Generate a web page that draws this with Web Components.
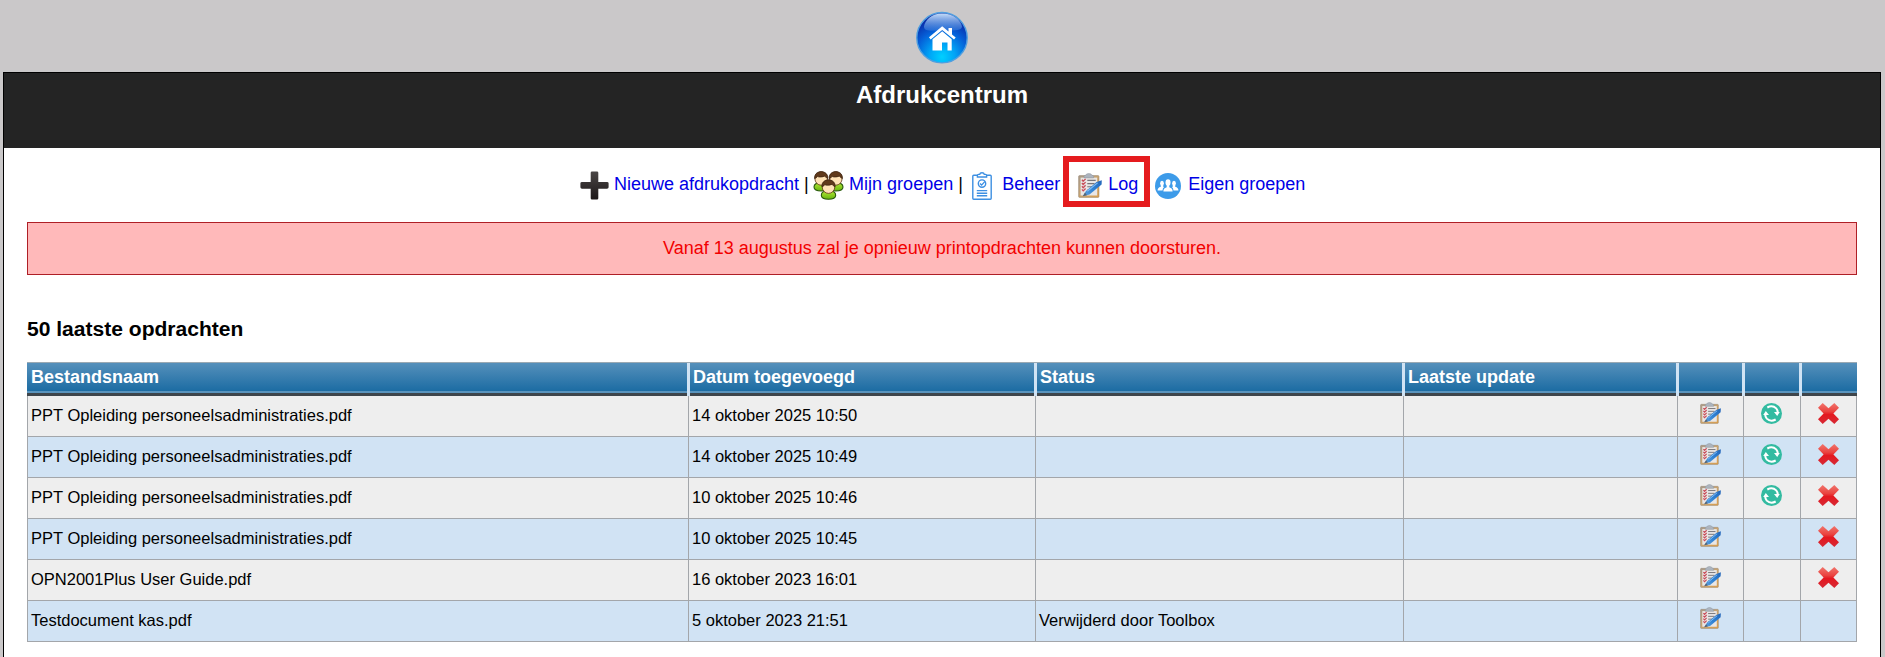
<!DOCTYPE html>
<html lang="nl">
<head>
<meta charset="utf-8">
<title>Afdrukcentrum</title>
<style>
html,body{margin:0;height:100%;overflow:hidden;background:#cac8c9}
body{font-family:"Liberation Sans",Arial,sans-serif;font-size:18px;color:#000}
</style>
</head>
<body>
<print-center></print-center>
<script>
const ICONS = {
home:`<svg viewBox="0 0 52 53" width="52" height="53"><defs>
<radialGradient id="b" cx=".5" cy=".88" r=".85"><stop offset="0" stop-color="#00d0ff"/><stop offset=".3" stop-color="#00a4f6"/><stop offset=".62" stop-color="#0560d8"/><stop offset="1" stop-color="#0a1f9c"/></radialGradient>
<linearGradient id="s" x1="0" y1="0" x2="0" y2="1"><stop offset="0" stop-color="#c4dcf8"/><stop offset="1" stop-color="#3c7edc" stop-opacity=".55"/></linearGradient></defs>
<circle cx="26" cy="26.7" r="25.2" fill="url(#b)" stroke="#4f9fe0" stroke-width="1.4"/>
<path d="M26 2.6C37 2.6 45 9 46 15.5C46 20 36 19.5 26 19.5S8 21 8 15.5C9 9 16 2.6 26 2.6Z" fill="url(#s)"/>
<path d="M13 26.2L26.2 15.3 32.5 20.4V17H36V23.4L39.7 26.4 38 28.6 26.2 19 14.7 28.6Z" fill="#fff"/><path d="M16.5 28.2L26.2 20.2 35.7 28.2V39.5H31.5V31.5H26V39.5H16.5Z" fill="#fff"/></svg>`,
plus:`<svg viewBox="0 0 29 30" width="29" height="30"><defs><linearGradient id="p" x1="0" y1="0" x2="0" y2="1"><stop offset="0" stop-color="#4a4646"/><stop offset="1" stop-color="#1d1718"/></linearGradient></defs><path d="M12 .5H17Q18.3 .5 18.3 1.8V11H27Q28.6 11 28.6 12.3V16.3Q28.6 17.7 27 17.7H18.3V27.2Q18.3 28.5 17 28.5H12Q10.7 28.5 10.7 27.2V17.7H2Q.4 17.7 .4 16.3V12.3Q.4 11 2 11H10.7V1.8Q10.7 .5 12 .5Z" fill="url(#p)"/></svg>`,
people:`<svg viewBox="0 0 31 29" width="31" height="29"><defs>
<linearGradient id="g" x1="0" y1="0" x2="0" y2="1"><stop offset="0" stop-color="#b4e834"/><stop offset="1" stop-color="#67b50e"/></linearGradient>
<g id="m"><path d="M-7.2 8.5Q-7.2 4 0 4T7.2 8.5Q7.2 12.4 0 12.4T-7.2 8.5Z" fill="url(#g)" stroke="#28580c" stroke-width="1.1"/><ellipse cx="0" cy="0" rx="6.3" ry="6.6" fill="#ffe2b6" stroke="#5d3210" stroke-width=".8"/><path d="M-6.6 0C-7.4 -9.4 7.4 -9.4 6.6 0C5 -.8 4.5 -1.6 3.5 -2.4C0 -1.2 -3 -1.4 -4 -2.4C-4.2 -1 -5 -.6 -6.6 0Z" fill="#60391b" stroke="#38200d" stroke-width=".7"/></g></defs>
<use href="#m" x="8.2" y="7.6"/><use href="#m" x="22.8" y="7.6"/><use href="#m" x="15.5" y="15.8"/></svg>`,
board:`<svg viewBox="0 0 20 28" width="20" height="28" fill="none" stroke="#3d8fe2" stroke-width="1.4"><path d="M6 3.3H1.7Q.8 3.3 .8 4.2V26.3Q.8 27.2 1.7 27.2H18.3Q19.2 27.2 19.2 26.3V4.2Q19.2 3.3 18.3 3.3H14M5.4 5V3.3Q5.4 2.4 6.5 2.4H7.7Q8 .8 10 .8T12.3 2.4H13.5Q14.6 2.4 14.6 3.3V5Z"/><circle cx="10" cy="11.6" r="3.7"/><path d="M8 11.6L9.6 13.1 13 9.4M4.8 18.6H15.2M4.8 21.2H15.2M4.8 23.7H15.2"/></svg>`,
log:`<svg viewBox="0 0 24 25" width="24" height="25"><defs><linearGradient id="c" x1="0" y1="0" x2="1" y2="1"><stop offset="0" stop-color="#a89a8a"/><stop offset=".5" stop-color="#c9a470"/><stop offset="1" stop-color="#dda04c"/></linearGradient><linearGradient id="q" x1="0" y1="1" x2="1" y2="0"><stop offset="0" stop-color="#5f9fdc"/><stop offset=".5" stop-color="#2f82d4"/><stop offset="1" stop-color="#2465b8"/></linearGradient></defs>
<rect x=".6" y="2.6" width="20.4" height="21.8" rx="1" fill="url(#c)" stroke="#94806a" stroke-width=".5"/><path d="M2.6 4.6H19.2V22.5H2.6Z" fill="#e9e6e5"/>
<path d="M6 4.9V3.2Q6 2.4 7.6 2.3Q8 .5 10.8 .5T14 2.3Q15.6 2.4 15.6 3.2V4.9Z" fill="#adb4be" stroke="#8a929c" stroke-width=".5"/>
<path d="M9.3 7.4H17.7M9.3 10.6H16.5M9.3 13.8H14M9.3 17H11.5" stroke="#77757a" stroke-width="1.1"/>
<path d="M3.9 6.8L5.2 8.3 7.6 5.9M3.9 10L5.2 11.5 7.6 9.1M3.9 13.2L5.2 14.7 7.6 12.3M3.9 16.4L5.2 17.9 7.6 15.5" fill="none" stroke="#c94c59" stroke-width="1.3"/>
<path d="M4.8 23.2L8 17.9 18.6 9 23.8 7.2 23.6 11.6 11.5 21.6Z" fill="url(#q)"/><path d="M9.3 18.3L19.6 9.9" stroke="#82bdf2" stroke-width="1.1"/><path d="M4.8 23.2L7 19.6 9 22.2Z" fill="#5a6572"/></svg>`,
group:`<svg viewBox="0 0 26 26" width="26" height="26"><circle cx="13" cy="13" r="13" fill="#3d9be9"/><g fill="#fff"><ellipse cx="7" cy="10.3" rx="1.9" ry="2.5"/><ellipse cx="19" cy="10.3" rx="1.9" ry="2.5"/><path d="M2.6 17.6Q2.4 14.7 5.8 13.8V12H8.2V13.8L9.1 14.1Q7.7 15 7.5 17.6ZM23.4 17.6Q23.6 14.7 20.2 13.8V12H17.8V13.8L16.9 14.1Q18.3 15 18.5 17.6Z"/><ellipse cx="13" cy="9.6" rx="2.5" ry="3.3"/><path d="M8.4 18.4Q8.2 15.2 11.7 14.2V12H14.3V14.2Q17.8 15.2 17.6 18.4Z"/></g></svg>`,
sync:`<svg viewBox="0 0 21 21" width="21" height="21"><circle cx="10.5" cy="10.5" r="10.5" fill="#33bba1"/><g fill="none" stroke="#fff" stroke-width="2"><path d="M6.3 4.5Q11.4 1.7 15.2 5.4Q16.6 7 16.8 9.4"/><path d="M14.7 16.5Q9.6 19.3 5.8 15.6Q4.4 14 4.2 11.6"/></g><path d="M13 9H18.8L16.2 12.9ZM8 12H2.2L4.8 8.1Z" fill="#fff"/></svg>`,
cross:`<svg viewBox="0 0 21 21" width="21" height="21"><defs><linearGradient id="x" x1="0" y1="0" x2="0" y2="1"><stop offset="0" stop-color="#f1766d"/><stop offset=".4" stop-color="#ea4340"/><stop offset=".55" stop-color="#e41820"/><stop offset="1" stop-color="#d62a35"/></linearGradient></defs><path d="M4.7 0L10.5 5.2 16.3 0 21 4.7 15.4 10.5 21 16.3 16.3 21 10.5 15.8 4.7 21 0 16.3 5.6 10.5 0 4.7Z" fill="url(#x)"/></svg>`
};
function define(name, html, setup){
  const t=document.createElement('template'); t.innerHTML=html;
  customElements.define(name, class extends HTMLElement{
    connectedCallback(){
      if(this.shadowRoot) return;
      const r=this.attachShadow({mode:'open'});
      r.append(t.content.cloneNode(true));
      if(setup) setup(this,r);
    }
  });
}
define('ui-icon',`<style>:host{display:block;flex:none}svg{display:block;width:100%;height:100%}</style>`,(el,r)=>{
  r.append(document.createRange().createContextualFragment(ICONS[el.getAttribute('name')]));
});
define('nav-link',`<style>
:host{display:flex;align-items:flex-start;position:relative;flex:none}
a{color:#0000e6;text-decoration:none;line-height:20px;white-space:nowrap;padding-top:3px}
:host([marked])::after{content:"";position:absolute;left:-15px;top:-15px;width:75px;height:39px;border:6px solid #e51b1e}
</style><slot name="icon"></slot><a><slot></slot></a>`);
define('alert-bar',`<style>
:host{display:block;box-sizing:border-box;height:53px;border:1px solid #ae1f26;background:#ffb9ba;color:#f20000;text-align:center;line-height:51px}
</style><slot></slot>`);
define('job-head',`<style>
:host{display:grid;grid-template-columns:var(--cols);height:34px;box-sizing:border-box;border-top:1px solid #9aa9b3;color:#fff;font-weight:bold}
span{box-sizing:border-box;height:33px;line-height:29px;padding-left:3px;margin-left:-1px;margin-right:1px;border-left:3px solid #d0e3f4;
 background:linear-gradient(#3e454b,#3e454b) 0 30px/100% 3px no-repeat,linear-gradient(#5a94bd,#5a94bd) 0 28px/100% 2px no-repeat,linear-gradient(#5590bb,#1c6ca3 28px)}
.first{border-left:0;margin-left:0;padding-left:4px}.last{margin-right:0}
</style><span class="first">Bestandsnaam</span><span>Datum toegevoegd</span><span>Status</span><span>Laatste update</span><span></span><span></span><span class="last"></span>`);
define('job-row',`<style>
:host{display:grid;grid-template-columns:var(--cols);height:41px;font-size:16.5px;background:#eee}
:host([alt]){background:#d1e3f4}
div{box-sizing:border-box;border-left:1px solid #a3a6aa;border-bottom:1px solid #a3a6aa;padding-left:3px;line-height:38px;white-space:nowrap}
div:last-child{border-right:1px solid #a3a6aa}
.i{display:flex;justify-content:center;padding:7px 0 0}
.i ui-icon{width:21px;height:21px}
.i ui-icon[name=log]{width:21px;height:22px;margin-top:-1px}
.i ui-icon[name=sync]{margin-right:2px}
</style>`,(el,r)=>{
  for(const k of ['file','date','status','update']){const d=document.createElement('div');d.textContent=el.getAttribute(k)||'';r.append(d);}
  const have=el.getAttribute('actions').split(' ');
  for(const k of ['log','sync','cross']){const d=document.createElement('div');d.className='i';
    if(have.includes(k)){const i=document.createElement('ui-icon');i.setAttribute('name',k);d.append(i);}
    r.append(d);}
});
define('job-table',`<style>:host{display:block;--cols:661px 347px 368px 274px 66px 57px 57px}</style><job-head></job-head><slot></slot>`);
define('print-center',`<style>
:host{display:flex;flex-direction:column;height:657px;padding:0 4px 0 3px}
.top{height:72px;flex:none;display:flex;justify-content:center;padding-top:11px;box-sizing:border-box}
.top ui-icon{width:52px;height:53px}
main{flex:1;border:1px solid #000;border-bottom:0;background:#fff;min-height:0}
h1{margin:0;height:75px;box-sizing:border-box;background:#242424;color:#fff;font-size:24px;line-height:28px;padding-top:8px;text-align:center}
.body{padding:0 23px}
nav{display:flex;align-items:flex-start;height:74px;box-sizing:border-box;padding:23px 0 0 553px}
nav>span{line-height:20px;padding-top:3px;width:5px;flex:none}
h3{margin:42px 0 0;font-size:21.06px;line-height:24px;height:45px}
</style>
<div class="top"><ui-icon name="home"></ui-icon></div>
<main><h1>Afdrukcentrum</h1><div class="body">
<nav>
<nav-link><ui-icon slot="icon" name="plus" style="width:29px;height:30px;margin-right:5px"></ui-icon>Nieuwe afdrukopdracht</nav-link>
<span style="margin-left:5px;margin-right:4px">|</span>
<nav-link><ui-icon slot="icon" name="people" style="width:31px;height:29px;margin:0 5px 0 0"></ui-icon>Mijn groepen</nav-link>
<span style="margin-left:5px;margin-right:9px">|</span>
<nav-link><ui-icon slot="icon" name="board" style="width:20px;height:28px;margin:1px 10px 0 0"></ui-icon>Beheer</nav-link>
<nav-link marked style="margin-left:18px"><ui-icon slot="icon" name="log" style="width:24px;height:25px;margin:2px 6px 0 0"></ui-icon>Log</nav-link>
<nav-link style="margin-left:17px"><ui-icon slot="icon" name="group" style="width:26px;height:26px;margin:2px 7px 0 0"></ui-icon>Eigen groepen</nav-link>
</nav>
<alert-bar>Vanaf 13 augustus zal je opnieuw printopdrachten kunnen doorsturen.</alert-bar>
<h3>50 laatste opdrachten</h3>
<job-table>
<job-row file="PPT Opleiding personeelsadministraties.pdf" date="14 oktober 2025 10:50" actions="log sync cross"></job-row>
<job-row alt file="PPT Opleiding personeelsadministraties.pdf" date="14 oktober 2025 10:49" actions="log sync cross"></job-row>
<job-row file="PPT Opleiding personeelsadministraties.pdf" date="10 oktober 2025 10:46" actions="log sync cross"></job-row>
<job-row alt file="PPT Opleiding personeelsadministraties.pdf" date="10 oktober 2025 10:45" actions="log cross"></job-row>
<job-row file="OPN2001Plus User Guide.pdf" date="16 oktober 2023 16:01" actions="log cross"></job-row>
<job-row alt file="Testdocument kas.pdf" date="5 oktober 2023 21:51" status="Verwijderd door Toolbox" actions="log"></job-row>
</job-table>
</div></main>`);
</script>
</body>
</html>
